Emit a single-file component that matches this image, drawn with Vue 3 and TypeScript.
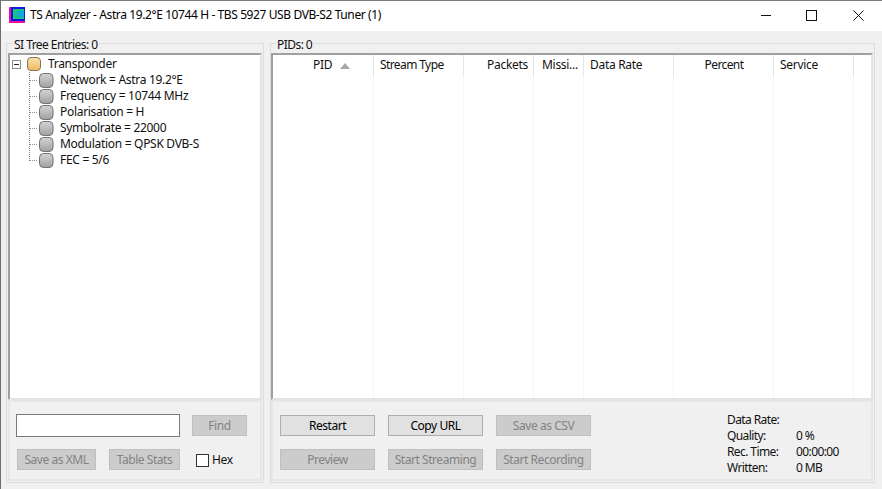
<script setup lang="ts">
const nodes: string[] = [
  'Network = Astra 19.2°E',
  'Frequency = 10744 MHz',
  'Polarisation = H',
  'Symbolrate = 22000',
  'Modulation = QPSK DVB-S',
  'FEC = 5/6',
]
const columns = [
  { label: 'PID', width: 101, cls: 'sorted' },
  { label: 'Stream Type', width: 90, cls: 'narrow' },
  { label: 'Packets', width: 70, cls: 'right' },
  { label: 'Missi...', width: 50, cls: 'tight' },
  { label: 'Data Rate', width: 90, cls: '' },
  { label: 'Percent', width: 100, cls: 'center narrow' },
  { label: 'Service', width: 80, cls: '' },
  { label: '', width: 19, cls: 'last' },
]
const stats = [
  ['Data Rate:', ''],
  ['Quality:', '0 %'],
  ['Rec. Time:', '00:00:00'],
  ['Written:', '0 MB'],
]
const columnStyle = (w: number) => ({ width: w + 'px' })
</script>

<template>
  <div class="window">
    <header class="titlebar">
      <svg class="appicon" width="16" height="16" viewBox="0 0 16 16">
        <rect width="16" height="16" fill="#e6149b" />
        <rect x="2" y="0" width="14" height="14" fill="#1414e6" />
        <rect x="4" y="2" width="11" height="10" fill="#14c878" />
        <rect x="8" y="4" width="7" height="6" fill="#14a8d8" />
      </svg>
      <span class="title">TS Analyzer - Astra 19.2°E 10744 H - TBS 5927 USB DVB-S2 Tuner (1)</span>
      <div class="controls">
        <svg width="45" height="30" viewBox="0 0 45 30"><path d="M17 15.5h10" stroke="#111" fill="none" /></svg>
        <svg width="45" height="30" viewBox="0 0 45 30"><rect x="17.5" y="10.5" width="10" height="10" stroke="#111" fill="none" /></svg>
        <svg class="close" width="45" height="30" viewBox="0 0 45 30"><path d="M17.5 10.5l10 10M27.5 10.5l-10 10" stroke="#111" fill="none" /></svg>
      </div>
    </header>

    <main class="content">
      <section class="group left">
        <div class="legend">SI Tree Entries: 0</div>
        <div class="treebox">
          <div class="row root">
            <span class="expander"><i></i></span>
            <svg class="node" width="16" height="16" viewBox="0 0 16 16">
              <defs>
                <linearGradient id="gold" x1="0" y1="0" x2="0" y2="1">
                  <stop offset="0" stop-color="#fbe3ad" />
                  <stop offset="1" stop-color="#f0b85c" />
                </linearGradient>
              </defs>
              <rect x="1.5" y="1.5" width="13" height="13" rx="3.5" fill="url(#gold)" stroke="#86775a" />
            </svg>
            <span>Transponder</span>
          </div>
          <div class="children">
            <div v-for="node in nodes" :key="node" class="row child">
              <span class="dots"></span>
              <svg class="node" width="16" height="16" viewBox="0 0 16 16">
                <defs>
                  <linearGradient id="grey" x1="0" y1="0" x2="0" y2="1">
                    <stop offset="0" stop-color="#d4d4d4" />
                    <stop offset="1" stop-color="#a0a0a0" />
                  </linearGradient>
                </defs>
                <rect x="0.5" y="1.5" width="13.5" height="14" rx="4" fill="url(#grey)" stroke="#707070" />
              </svg>
              <span>{{ node }}</span>
            </div>
          </div>
        </div>
        <div class="panel leftpanel">
          <div class="findrow">
            <input class="search" type="text" />
            <button class="btn off find" disabled>Find</button>
          </div>
          <div class="actionrow">
            <button class="btn off xml" disabled>Save as XML</button>
            <button class="btn off stats-btn" disabled>Table Stats</button>
            <label class="hex"><span class="box"></span>Hex</label>
          </div>
        </div>
      </section>

      <section class="group right">
        <div class="legend">PIDs: 0</div>
        <div class="tablebox">
          <div class="thead">
            <div
              v-for="c in columns"
              :key="c.label"
              class="th"
              :class="c.cls"
              :style="columnStyle(c.width)"
            >
              {{ c.label }}
              <svg v-if="c.cls.includes('sorted')" class="arrow" width="10" height="6" viewBox="0 0 10 6"><path d="M5 0l5 6H0z" fill="#a8a8a8" /></svg>
            </div>
          </div>
          <div class="tbody">
            <div v-for="c in columns" :key="c.label" class="td" :style="columnStyle(c.width)"></div>
          </div>
        </div>
        <div class="panel rightpanel">
          <div class="btngrid">
            <button class="btn on">Restart</button>
            <button class="btn on">Copy URL</button>
            <button class="btn off" disabled>Save as CSV</button>
            <button class="btn off" disabled>Preview</button>
            <button class="btn off" disabled>Start Streaming</button>
            <button class="btn off" disabled>Start Recording</button>
          </div>
          <div class="stats">
            <template v-for="s in stats" :key="s[0]">
              <span>{{ s[0] }}</span><span class="val">{{ s[1] }}</span>
            </template>
          </div>
        </div>
      </section>
    </main>
  </div>
</template>

<style>
html, body { margin: 0; padding: 0; overflow: hidden; }
</style>

<style scoped>
.window {
  width: 882px;
  height: 489px;
  box-sizing: border-box;
  display: flex;
  flex-direction: column;
  background: #f0f0f0;
  border-left: 1px solid #6f6f6f;
  border-top: 1px solid #7a7a7a;
  font-family: "Noto Sans", "Open Sans", sans-serif;
  font-size: 12px;
  letter-spacing: -0.3px;
  color: #000;
  overflow: hidden;
}
.titlebar {
  height: 30px;
  flex: none;
  background: #fff;
  display: flex;
  align-items: center;
}
.appicon { margin: 0 5px 2px 8px; }
.title { white-space: nowrap; line-height: 16px; margin-bottom: 2px; letter-spacing: -0.4px; }
.controls { margin-left: auto; display: flex; margin-right: 1px; margin-bottom: 2px; }
.close { margin-left: 2px; }
.content {
  flex: 1;
  display: flex;
  gap: 6px;
  padding: 12px 7px 6px 5px;
  min-height: 0;
}
.group {
  box-sizing: border-box;
  border: 1px solid #dcdcdc;
  display: flex;
  flex-direction: column;
  padding: 0 1px 1px;
}
.left { width: 258px; }
.right { flex: 1; min-width: 0; padding-left: 0; }
.legend {
  align-self: flex-start;
  height: 16px;
  line-height: 16px;
  margin: -7px 0 0 5px;
  padding: 0 1px;
  background: linear-gradient(to bottom, #f0f0f0 0 10px, transparent 10px);
  white-space: nowrap;
  color: #111;
  letter-spacing: -0.55px;
}
.treebox, .tablebox {
  height: 347px;
  box-sizing: border-box;
  background: #fff;
  border: 2px solid #a0a0a0;
  border-right-color: #e3e3e3;
  border-bottom-color: #e3e3e3;
  flex: none;
}
.treebox { padding: 1px 0 0 2px; }
.row { height: 16px; line-height: 16px; display: flex; align-items: center; white-space: nowrap; color: #111; }
.expander {
  width: 9px;
  height: 9px;
  box-sizing: border-box;
  border: 1px solid #8a8a8a;
  display: flex;
  align-items: center;
  justify-content: center;
  margin-right: 5px;
}
.expander i { width: 5px; height: 1px; background: #222; display: block; }
.root .node { margin-right: 6px; }
.children { padding-left: 17px; }
.child .node { margin-right: 5px; }
.dots {
  width: 10px;
  height: 16px;
  box-sizing: border-box;
  background-image:
    repeating-linear-gradient(to bottom, #888 0 1px, transparent 1px 2px),
    repeating-linear-gradient(to right, #888 0 1px, transparent 1px 2px);
  background-size: 1px 100%, 8px 1px;
  background-position: 0 0, 1px 8px;
  background-repeat: no-repeat;
}
.child:last-child .dots { background-size: 1px 9px, 8px 1px; }
.panel {
  flex: 1;
  box-sizing: border-box;
  border: 2px solid #e6e6e6;
  min-height: 0;
}
.leftpanel { display: flex; flex-direction: column; padding: 12px 0 0 6px; }
.findrow { display: flex; align-items: center; height: 23px; }
.search {
  width: 164px;
  height: 23px;
  box-sizing: border-box;
  border: 1px solid #7a7a7a;
  background: #fff;
  padding: 0;
  margin: 0;
  outline: none;
}
.btn {
  width: 95px;
  height: 21px;
  box-sizing: border-box;
  padding: 0;
  margin: 0;
  font: inherit;
  letter-spacing: -0.45px;
  border: 1px solid #adadad;
  background: #e1e1e1;
  color: #000;
  white-space: nowrap;
  line-height: 17px;
}
.btn.off { background: #cccccc; border-color: #bfbfbf; color: #838383; }
.find { width: 55px; margin-left: 12px; }
.actionrow { display: flex; align-items: center; margin-top: 12px; height: 21px; padding-left: 1px; }
.xml { width: 79px; }
.stats-btn { width: 71px; margin-left: 13px; }
.hex { display: flex; align-items: center; margin-left: 16px; color: #111; line-height: 16px; padding-top: 1px; }
.box {
  width: 13px;
  height: 13px;
  box-sizing: border-box;
  border: 1px solid #333;
  background: #fff;
  margin-right: 3px;
}
.thead { display: flex; height: 20px; }
.th {
  box-sizing: border-box;
  height: 20px;
  line-height: 19px;
  padding: 0 5px 0 6px;
  border-right: 1px solid #e5e5e5;
  white-space: nowrap;
  color: #111;
  overflow: hidden;
  flex: none;
}
.th.narrow { letter-spacing: -0.6px; }
.th.right { text-align: right; }
.th.tight { padding-left: 8px; padding-right: 0; }
.th.center { text-align: center; }
.th.sorted { padding-left: 40px; padding-right: 0; }
.th.last { border-right: 0; }
.arrow { margin-left: 5px; }
.tbody { display: flex; height: 323px; }
.td {
  box-sizing: border-box;
  flex: none;
  height: 100%;
  background-image: repeating-linear-gradient(to bottom, #ececec 0 1px, transparent 1px 2px);
  background-size: 1px 100%;
  background-position: right top;
  background-repeat: no-repeat;
}
.td:last-child { background: none; }
.rightpanel { display: flex; padding: 13px 0 0 7px; }
.btngrid {
  display: grid;
  grid-template-columns: repeat(3, 95px);
  grid-auto-rows: 21px;
  column-gap: 13px;
  row-gap: 13px;
  align-content: start;
}
.stats {
  display: grid;
  grid-template-columns: 68px auto;
  grid-auto-rows: 16px;
  line-height: 16px;
  margin: -3px 0 0 136px;
  color: #111;
  align-content: start;
  letter-spacing: -0.6px;
}
.val { white-space: nowrap; padding-left: 1px; }
</style>
